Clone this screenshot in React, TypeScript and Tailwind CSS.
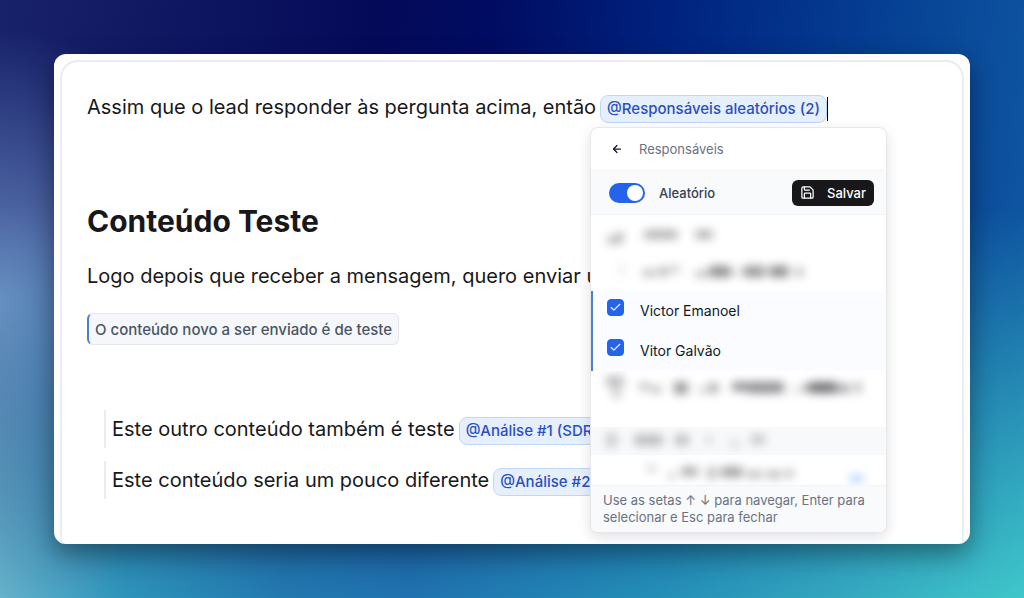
import { useState } from "react";
import type { ReactNode } from "react";
import { ArrowLeft, Check, Save } from "lucide-react";

const people = [
  { id: "victor", name: "Victor Emanoel" },
  { id: "vitor", name: "Vitor Galvão" },
];

// [x, y, width, height, opacity]
type Smudge = [number, number, number, number, number];

const smudgesTop: Smudge[] = [
  [16, 21, 15, 8, 0.35], [26, 17, 7, 8, 0.35],
  [53, 15, 34, 9, 0.4], [104, 15, 18, 9, 0.4],
  [30, 48, 2, 14, 0.25],
  [51, 55, 15, 6, 0.4], [68, 52, 10, 9, 0.4], [80, 51, 9, 6, 0.35],
  [104, 56, 13, 6, 0.4], [118, 51, 22, 11, 0.6], [143, 54, 5, 7, 0.25],
  [152, 51, 22, 11, 0.55], [178, 51, 20, 11, 0.6], [205, 52, 7, 10, 0.4],
];

const smudgesBottom: Smudge[] = [
  [15, 5, 18, 11, 0.35], [21, 18, 9, 9, 0.3],
  [48, 12, 10, 7, 0.4], [60, 15, 10, 7, 0.4], [83, 11, 14, 12, 0.55],
  [108, 16, 8, 6, 0.35], [118, 12, 9, 10, 0.5],
  [141, 11, 14, 9, 0.6], [155, 11, 38, 11, 0.6], [201, 17, 6, 5, 0.3],
  [211, 13, 10, 8, 0.5], [219, 11, 27, 11, 0.75], [247, 13, 12, 9, 0.5], [264, 11, 6, 11, 0.45],
  [15, 62, 11, 14, 0.25],
  [43, 64, 29, 10, 0.35], [84, 64, 14, 10, 0.35], [115, 65, 6, 8, 0.25],
  [139, 70, 9, 6, 0.25], [160, 64, 14, 9, 0.3],
  [56, 95, 9, 5, 0.35], [77, 102, 8, 6, 0.3], [90, 96, 17, 9, 0.45],
  [116, 96, 10, 12, 0.35], [130, 96, 22, 10, 0.5], [156, 100, 15, 7, 0.4],
  [175, 100, 16, 7, 0.4], [195, 98, 7, 9, 0.4],
];

function Smudges({ items }: { items: Smudge[] }) {
  return (
    <g className="blur-[5px]" fill="#3f3f46">
      {items.map(([x, y, width, height, opacity]) => (
        <rect key={`${x}-${y}`} x={x} y={y} width={width} height={height} rx="3" opacity={opacity} />
      ))}
    </g>
  );
}

function Mention({ children }: { children: ReactNode }) {
  return (
    <span className="inline-flex h-7 items-center rounded-lg border border-[#bfd7f5] bg-[#e6f0fd] px-1.5 text-[15px] font-medium whitespace-nowrap text-[#2a4fc0]">
      {children}
    </span>
  );
}

function AssigneeMenu() {
  const [random, setRandom] = useState(true);
  const [selected, setSelected] = useState(people.map((p) => p.id));

  function toggle(id: string) {
    setSelected((ids) => (ids.includes(id) ? ids.filter((i) => i !== id) : [...ids, id]));
  }

  return (
    <div className="absolute top-full right-[50px] z-10 mt-1 w-[297px] overflow-hidden rounded-lg border border-gray-200 bg-white whitespace-normal shadow-[0_4px_14px_rgba(0,0,0,0.12)]">
      <div className="flex h-[43px] items-center gap-4 border-b border-gray-100 px-5">
        <button aria-label="Voltar" className="text-gray-900">
          <ArrowLeft size={12} strokeWidth={2.5} />
        </button>
        <span className="text-[13px] text-gray-500">Responsáveis</span>
      </div>

      <div className="flex h-11 items-center border-b border-gray-100 bg-[#f8fafc] pr-3 pl-[18px]">
        <label className="flex items-center gap-3.5 text-[13px] font-medium text-gray-700">
          <input
            type="checkbox"
            role="switch"
            checked={random}
            onChange={() => setRandom(!random)}
            className="h-5 w-9 appearance-none rounded-full bg-gray-300 p-0.5 before:block before:size-4 before:rounded-full before:bg-white checked:bg-[#2563eb] checked:before:translate-x-4"
          />
          Aleatório
        </label>
        <button className="ml-auto flex h-[26px] items-center gap-3 rounded-md bg-[#18181b] px-2 text-[13px] font-medium text-white">
          <Save size={15} />
          Salvar
        </button>
      </div>

      <svg viewBox="0 0 295 76" className="block w-full" aria-hidden="true">
        <Smudges items={smudgesTop} />
      </svg>

      <div className="border-l-2 border-[#4a80d0] bg-[#fafcff]">
        {people.map((person) => (
          <label key={person.id} className="flex h-10 items-start gap-4 px-3.5 pt-2 text-sm leading-6 text-gray-900">
            <span className="grid place-items-center">
              <input
                type="checkbox"
                checked={selected.includes(person.id)}
                onChange={() => toggle(person.id)}
                className="col-start-1 row-start-1 size-[17px] appearance-none rounded border border-gray-300 checked:border-[#2563eb] checked:bg-[#2563eb]"
              />
              <Check size={13} strokeWidth={2} className="pointer-events-none col-start-1 row-start-1 text-white" />
            </span>
            {person.name}
          </label>
        ))}
      </div>

      <svg viewBox="0 0 295 114" className="block w-full" aria-hidden="true">
        <rect y="56" width="295" height="28" fill="#f8f9fb" />
        <Smudges items={smudgesBottom} />
        <rect x="258" y="104" width="15" height="7" rx="3" fill="#93c5fd" opacity="0.7" className="blur-[4px]" />
      </svg>

      <p className="border-t border-gray-100 bg-[#f8fafc] px-3 py-1.5 text-[13px] leading-[17px] text-gray-500">
        Use as setas ↑ ↓ para navegar, Enter para selecionar e Esc para fechar
      </p>
    </div>
  );
}

export default function App() {
  return (
    <div className="relative isolate flex min-h-screen bg-[linear-gradient(90deg,#66b3cc_0%,#2e95bb_12%,#2379b0_28%,#2073b0_40%,#2590b8_65%,#35a8c0_82%,#40c8cb_100%)] p-[54px] font-['Inter',sans-serif]">
      {/* night-blue wash that fades out towards the bottom */}
      <div className="absolute inset-0 -z-10 bg-[radial-gradient(ellipse_24%_45%_at_0%_50%,#6685bd_0%,transparent_100%),linear-gradient(95deg,#18226a_0%,#050a58_35%,#000c62_46%,#00227f_62%,#053f93_82%,#1059a3_100%)] [mask-image:linear-gradient(#000_35%,transparent_100%)]" />

      <main className="flex flex-1 overflow-hidden rounded-xl bg-white px-1.5 pt-1.5 shadow-[0_10px_26px_rgba(0,0,0,0.4)]">
        <article className="flex-1 rounded-t-[18px] border-2 border-b-0 border-[#ececee] px-[25px] pt-[29px] text-xl text-[#18181b]">
          <div className="relative flex items-baseline gap-1 leading-8 whitespace-nowrap">
            Assim que o lead responder às pergunta acima, então
            <span className="flex items-center">
              <Mention>@Responsáveis aleatórios (2)</Mention>
              <span className="h-6 w-px bg-black" />
            </span>
            <AssigneeMenu />
          </div>

          <h2 className="mt-[78px] text-3xl leading-10 font-bold">Conteúdo Teste</h2>

          <p className="mt-[19px] leading-8 whitespace-nowrap">Logo depois que receber a mensagem, quero enviar um</p>

          <blockquote className="mt-[21px] flex h-8 w-fit items-center rounded-md border border-l-2 border-gray-200 border-l-[#4a80d0] bg-[#f6f7fa] px-1.5 text-[15px] font-medium text-gray-600">
            O conteúdo novo a ser enviado é de teste
          </blockquote>

          <div className="mt-[65px] ml-[17px] flex flex-col gap-[13px] leading-[38px] whitespace-nowrap">
            <p className="flex h-[38px] items-baseline gap-1 border-l-2 border-[#ececee] pl-1.5">
              Este outro conteúdo também é teste
              <Mention>@Análise #1 (SDR)</Mention>
            </p>
            <p className="flex h-[38px] items-baseline gap-1 border-l-2 border-[#ececee] pl-1.5">
              Este conteúdo seria um pouco diferente
              <Mention>@Análise #2 (SDR)</Mention>
            </p>
          </div>
        </article>
      </main>
    </div>
  );
}
